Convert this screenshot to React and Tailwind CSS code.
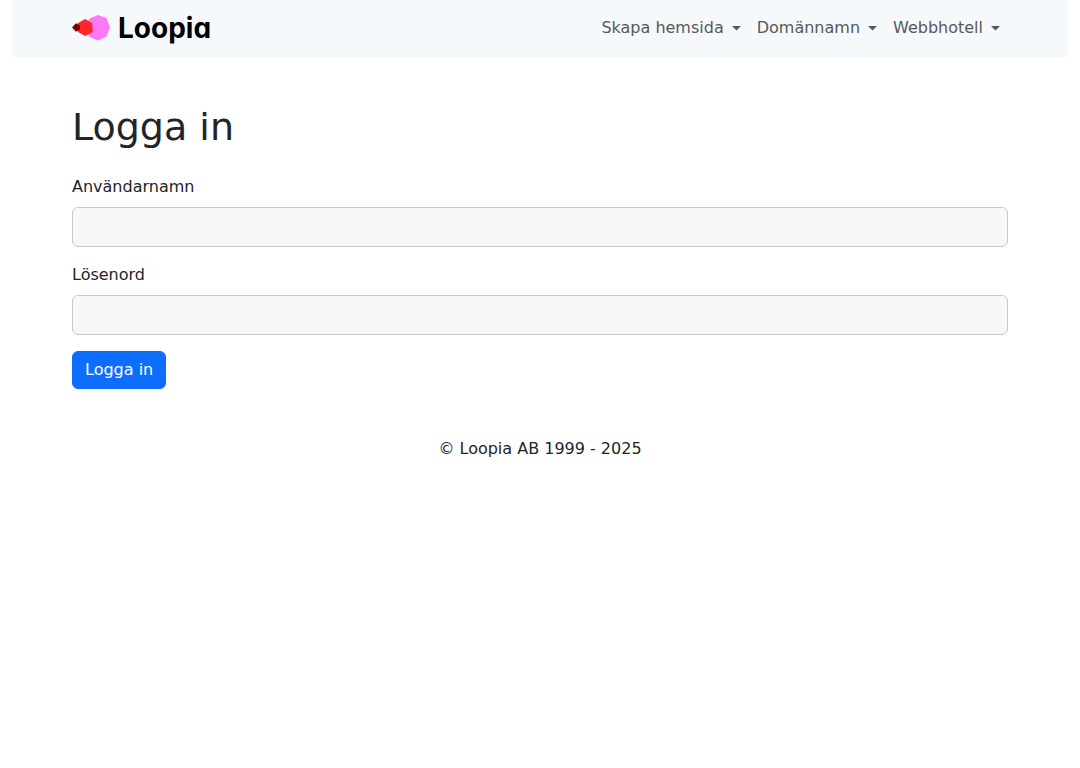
const menus = ["Skapa hemsida", "Domännamn", "Webbhotell"];

function Logo() {
  return (
    <a href="/" aria-label="Loopia" className="flex h-8 items-center gap-2 text-black">
      <svg width="38" height="28" viewBox="0 0 38 28" aria-hidden="true">
        <polygon
          points="26,1 34.5,4 38,13.5 34.5,22.5 26,26.5 17.5,23 13.5,13.5 17.5,4.5"
          fill="#ff78f8"
        />
        <polygon points="13.2,5 20.3,9.2 20.8,18 13.2,22 6,18 5.6,9.2" fill="#ff2828" />
        <polygon points="4,9.3 8,11.6 8,15.6 4,17.7 0,13.5" fill="#780000" />
      </svg>
      <span className="font-['Inter',sans-serif] text-[28px] leading-8 font-bold [font-feature-settings:'cv11','ss03'] [font-optical-sizing:none]">
        Loopia
      </span>
    </a>
  );
}

function MenuButton({ label }) {
  return (
    <button type="button" aria-haspopup="true" className="flex items-center gap-2 p-2 text-[#565859]">
      {label}
      <svg width="9" height="6" viewBox="0 0 9 6" fill="currentColor" aria-hidden="true">
        <path d="M0 1h9L4.5 5.5z" />
      </svg>
    </button>
  );
}

function Field({ id, label, type, autoComplete }) {
  return (
    <div className="mb-4">
      <label htmlFor={id} className="mb-2 block">
        {label}
      </label>
      <input
        id={id}
        name={id}
        type={type}
        autoComplete={autoComplete}
        className="block h-10 w-full rounded-md border border-[#c8c8c8] bg-[#f8f8f8] px-3"
      />
    </div>
  );
}

export default function App() {
  return (
    <div className="min-h-screen bg-white px-3 font-['DejaVu_Sans',sans-serif] text-base text-[#212529]">
      <header className="bg-[#f6f9fb] pt-2 pb-[9px]">
        <div className="mx-auto flex max-w-[960px] items-center justify-between px-3">
          <Logo />
          <nav className="flex">
            {menus.map((label) => (
              <MenuButton key={label} label={label} />
            ))}
          </nav>
        </div>
      </header>

      <main className="mx-auto max-w-[960px] px-3 pt-12">
        <h1 className="mb-[26px] text-[38px] leading-11">Logga in</h1>
        <form onSubmit={(event) => event.preventDefault()}>
          <Field id="username" label="Användarnamn" type="text" autoComplete="username" />
          <Field id="password" label="Lösenord" type="password" autoComplete="current-password" />
          <button type="submit" className="rounded-md border border-[#0d6efd] bg-[#0d6efd] px-3 py-1.5 text-white">
            Logga in
          </button>
        </form>
      </main>

      <footer className="py-12 text-center">© Loopia AB 1999 - 2025</footer>
    </div>
  );
}
